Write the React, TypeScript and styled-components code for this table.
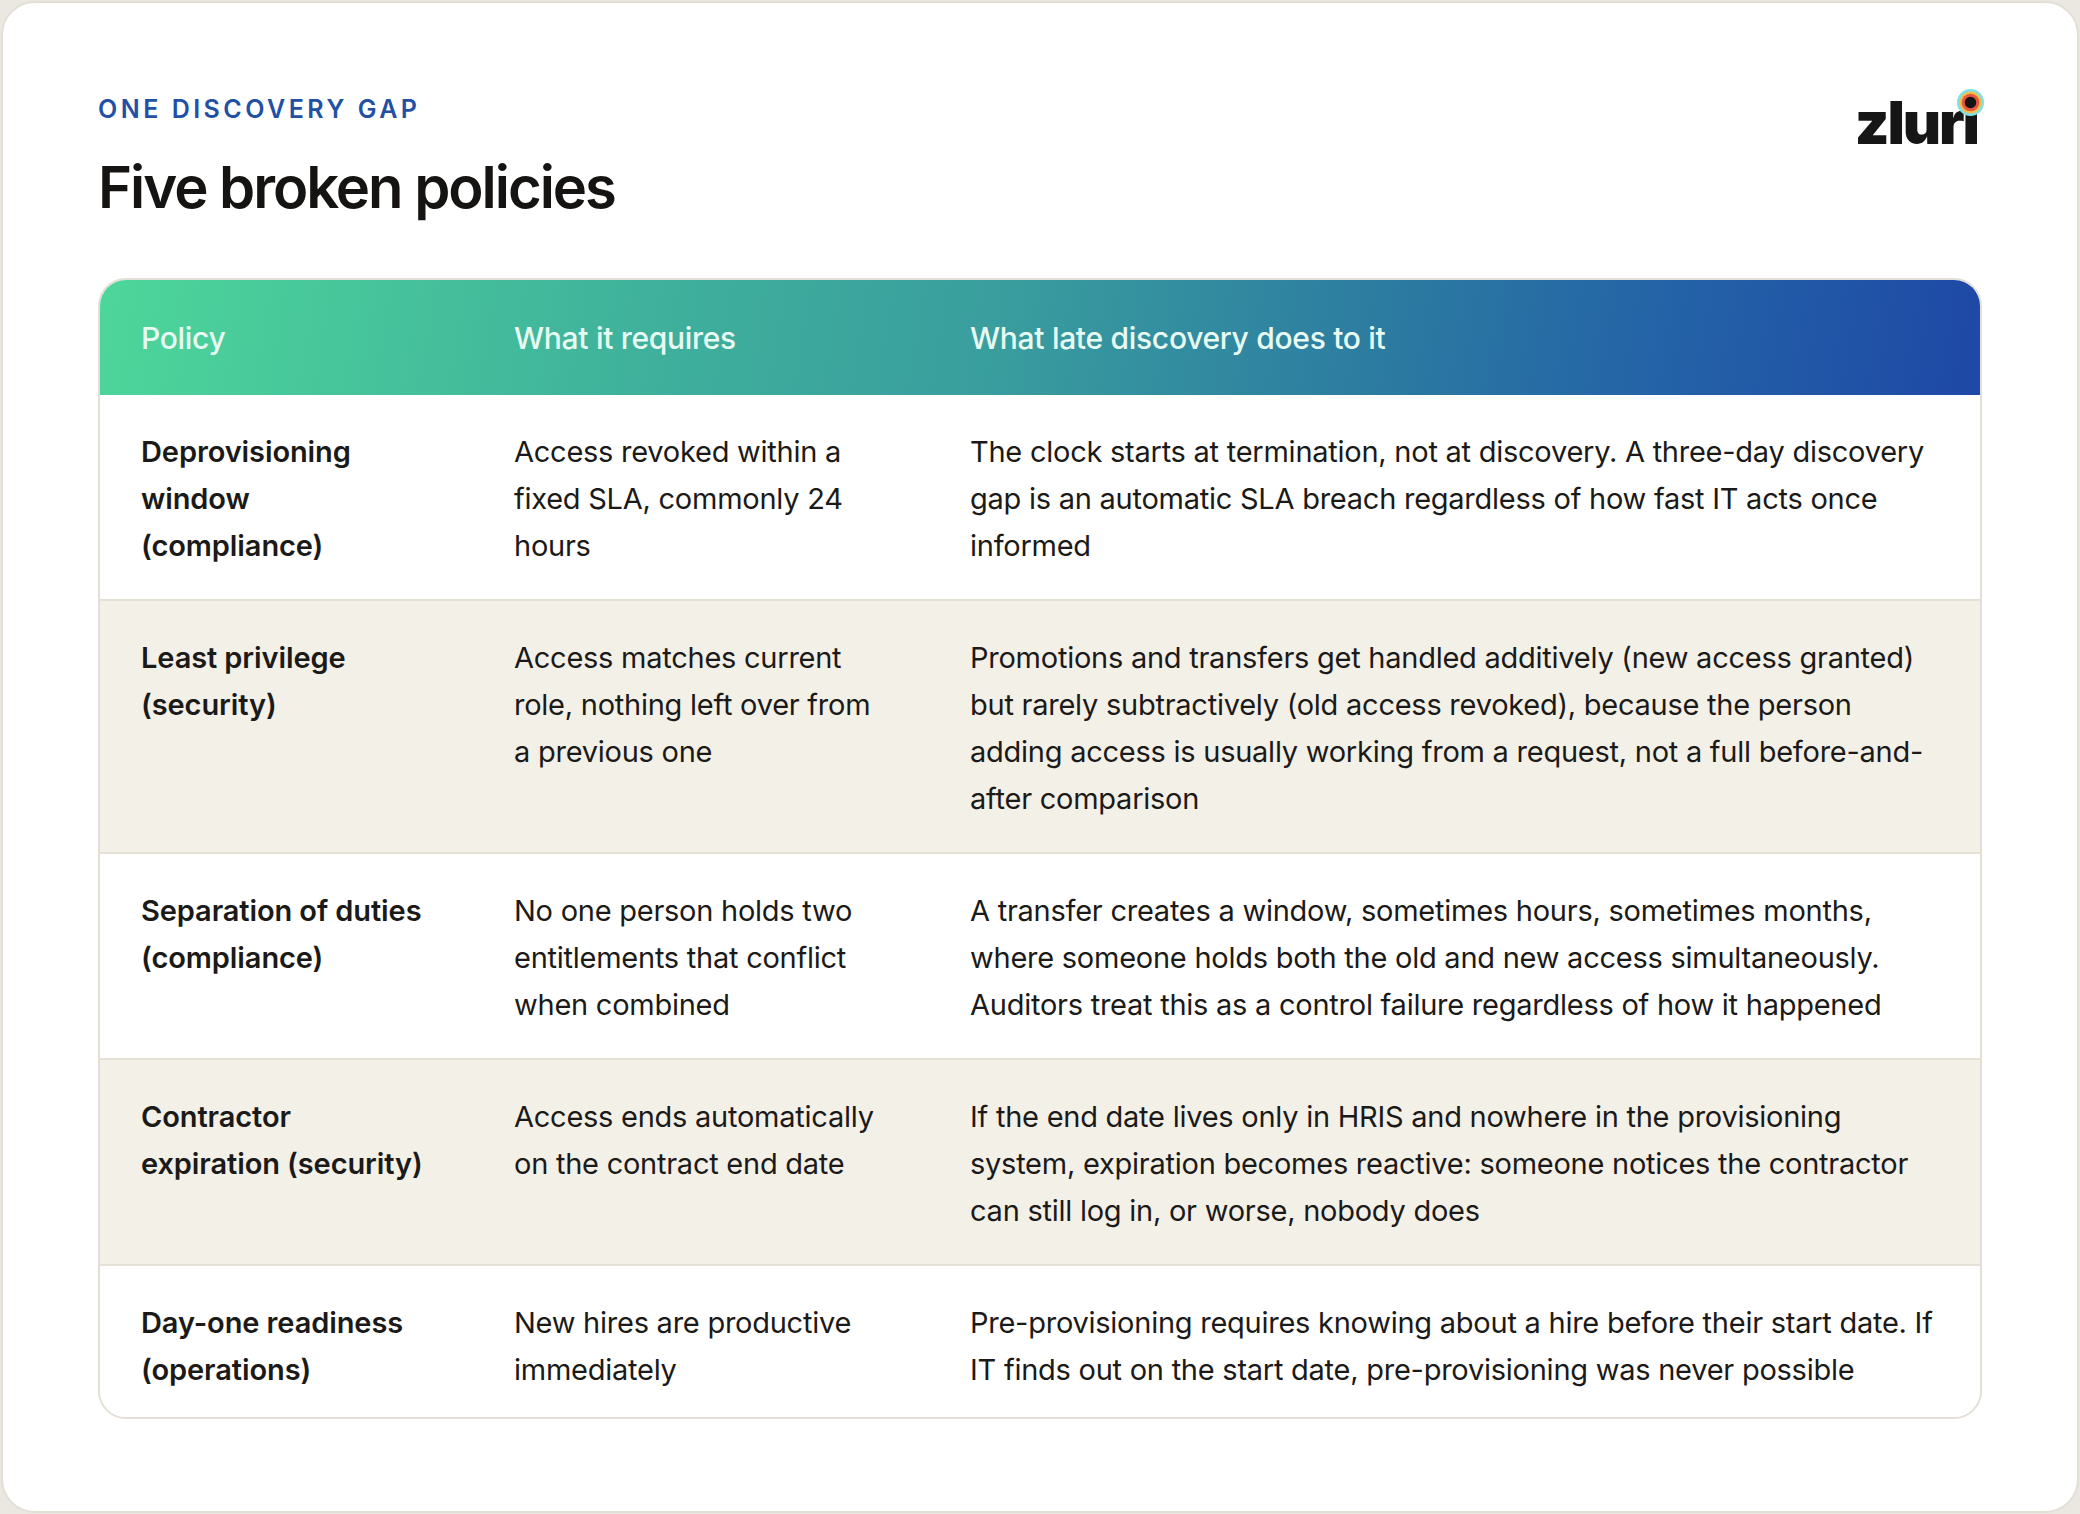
import React from "react";
import styled, { createGlobalStyle } from "styled-components";

const Global = createGlobalStyle`
  html, body { margin: 0; padding: 0; background: #ebe8e1; }
  body { font-family: Inter, "Noto Sans", "Liberation Sans", sans-serif; -webkit-font-smoothing: antialiased; }
  * { box-sizing: border-box; }
`;

const Page = styled.div`
  padding: 1px;
  min-height: 1514px;
`;

const Card = styled.main`
  background: #ffffff;
  border: 2px solid #e2dfd7;
  border-radius: 34px;
  min-height: 1512px;
  padding: 91px 95px 60px;
`;

const Top = styled.header`
  display: flex;
  justify-content: space-between;
  align-items: flex-start;
  margin-bottom: 56px;
`;

const Titles = styled.div`
  display: flex;
  flex-direction: column;
  gap: 28px;
`;

const Eyebrow = styled.div`
  font-size: 25px;
  line-height: 30px;
  font-weight: 600;
  letter-spacing: 0.14em;
  color: #2150a4;
  text-transform: uppercase;
`;

const Title = styled.h1`
  margin: 0;
  font-size: 58px;
  line-height: 70px;
  font-weight: 600;
  letter-spacing: -0.035em;
  color: #151412;
`;

const Logo = styled.div`
  position: relative;
  margin-top: 1px;
  font-size: 59px;
  line-height: 56px;
  font-weight: 900;
  letter-spacing: -0.035em;
  color: #161616;
  padding-right: 4px;
`;

const LogoDot = styled.svg`
  position: absolute;
  right: -2px;
  top: -6px;
  width: 27px;
  height: 27px;
`;

const Table = styled.section`
  border: 2px solid #e3dfd6;
  border-radius: 28px;
  overflow: hidden;
  background: #ffffff;
`;

const cols = "373px 456px 1fr";

const HeadRow = styled.div`
  display: grid;
  grid-template-columns: ${cols};
  height: 115px;
  align-items: center;
  background: linear-gradient(100deg, #4dd69a 0%, #3fb09c 30%, #399d9e 48%, #2c7ba1 68%, #2464a7 82%, #1e48a6 100%);
`;

const HeadCell = styled.div`
  padding: 0 41px;
  font-size: 30px;
  font-weight: 500;
  letter-spacing: -0.01em;
  color: #e7fbf2;
`;

const Row = styled.div<{ $alt?: boolean }>`
  display: grid;
  grid-template-columns: ${cols};
  background: ${(p) => (p.$alt ? "#f3f0e8" : "#ffffff")};
  & + & { border-top: 2px solid #e5e1d7; }
  padding: 33px 0 30px;
  &:last-child { padding-bottom: 24px; }
`;

const Cell = styled.div<{ $strong?: boolean }>`
  padding: 0 41px;
  font-size: 29px;
  line-height: 47px;
  font-weight: ${(p) => (p.$strong ? 600 : 400)};
  letter-spacing: ${(p) => (p.$strong ? "-0.1px" : "-0.25px")};
  color: #1b1a18;
`;

const rows = [
  {
    policy: "Deprovisioning window (compliance)",
    req: "Access revoked within a fixed SLA, commonly 24 hours",
    late: "The clock starts at termination, not at discovery. A three-day discovery gap is an automatic SLA breach regardless of how fast IT acts once informed",
  },
  {
    policy: "Least privilege (security)",
    req: "Access matches current role, nothing left over from a previous one",
    late: "Promotions and transfers get handled additively (new access granted) but rarely subtractively (old access revoked), because the person adding access is usually working from a request, not a full before-and-after comparison",
  },
  {
    policy: "Separation of duties (compliance)",
    req: "No one person holds two entitlements that conflict when combined",
    late: "A transfer creates a window, sometimes hours, sometimes months, where someone holds both the old and new access simultaneously. Auditors treat this as a control failure regardless of how it happened",
  },
  {
    policy: "Contractor expiration (security)",
    req: "Access ends automatically on the contract end date",
    late: "If the end date lives only in HRIS and nowhere in the provisioning system, expiration becomes reactive: someone notices the contractor can still log in, or worse, nobody does",
  },
  {
    policy: "Day-one readiness (operations)",
    req: "New hires are productive immediately",
    late: "Pre-provisioning requires knowing about a hire before their start date. If IT finds out on the start date, pre-provisioning was never possible",
  },
];

export default function App() {
  return (
    <Page>
      <Global />
      <Card>
        <Top>
          <Titles>
            <Eyebrow>One discovery gap</Eyebrow>
            <Title>Five broken policies</Title>
          </Titles>
          <Logo aria-label="zluri">
            zlurı
            <LogoDot viewBox="0 0 26 26">
              <circle cx="13" cy="13" r="13" fill="#7fe0ea" />
              <circle cx="13" cy="13" r="10.5" fill="#f4c04a" />
              <circle cx="13" cy="13" r="8.5" fill="#e8553f" />
              <circle cx="13" cy="13" r="5.5" fill="#141414" />
            </LogoDot>
          </Logo>
        </Top>
        <Table>
          <HeadRow>
            <HeadCell>Policy</HeadCell>
            <HeadCell>What it requires</HeadCell>
            <HeadCell>What late discovery does to it</HeadCell>
          </HeadRow>
          {rows.map((r, i) => (
            <Row key={r.policy} $alt={i % 2 === 1}>
              <Cell $strong>{r.policy}</Cell>
              <Cell>{r.req}</Cell>
              <Cell>{r.late}</Cell>
            </Row>
          ))}
        </Table>
      </Card>
    </Page>
  );
}
